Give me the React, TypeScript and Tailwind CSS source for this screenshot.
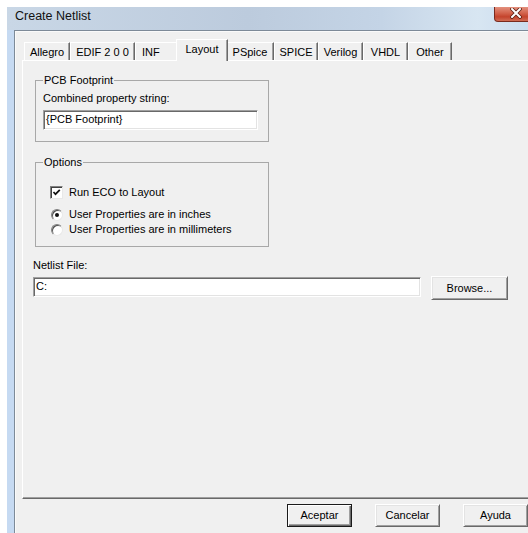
import React from "react";

type Tab = { label: string; cls: string; selected?: boolean; start?: boolean };

const tabs: Tab[] = [
  { label: "Allegro", cls: "w-[46px]" },
  { label: "EDIF 2 0 0", cls: "w-[65px]" },
  { label: "INF", cls: "w-[43px]", start: true },
  { label: "Layout", cls: "w-[52px]", selected: true },
  { label: "PSpice", cls: "w-[48px]" },
  { label: "SPICE", cls: "w-[44px]" },
  { label: "Verilog", cls: "w-[45px]" },
  { label: "VHDL", cls: "w-[45px]" },
  { label: "Other", cls: "w-[44px]" },
];

function TabHeader({ tab }: { tab: Tab }) {
  if (tab.selected) {
    return (
      <div
        className={`${tab.cls} relative z-10 -mx-[2px] mb-[-1px] h-[22px] shrink-0 border-l border-t border-r border-l-white border-t-white border-r-[#696969] bg-[#f0f0f0] pt-[3px] text-center leading-[13px] shadow-[inset_-1px_0_0_#a0a0a0]`}
      >
        {tab.label}
      </div>
    );
  }
  return (
    <div
      className={`${tab.cls} h-[18px] shrink-0 border-l border-t border-r border-l-white border-t-white border-r-[#696969] bg-[#f0f0f0] pt-[3px] leading-[13px] shadow-[inset_-1px_0_0_#a0a0a0] ${
        tab.start ? "pl-[6px] text-left" : "text-center"
      }`}
    >
      {tab.label}
    </div>
  );
}

function TextBox({ value, cls }: { value: string; cls: string }) {
  return (
    <div
      className={`${cls} h-[20px] border border-t-[#a0a0a0] border-l-[#a0a0a0] border-b-white border-r-white bg-white pl-[2px] leading-[16px] shadow-[inset_1px_1px_0_#696969,inset_-1px_-1px_0_#e3e3e3]`}
    >
      {value}
    </div>
  );
}

function Button({ label, cls, isDefault }: { label: string; cls: string; isDefault?: boolean }) {
  return (
    <div
      className={`${cls} flex items-center justify-center border ${
        isDefault
          ? "border-[#1a1a1a] shadow-[inset_1px_1px_0_#fff,inset_-1px_-1px_0_#696969,inset_-2px_-2px_0_#a0a0a0]"
          : "border-t-white border-l-white border-b-[#696969] border-r-[#696969] shadow-[inset_1px_1px_0_#e3e3e3,inset_-1px_-1px_0_#a0a0a0]"
      } bg-[#f0f0f0] leading-[13px]`}
    >
      {label}
    </div>
  );
}

function CheckBox() {
  return (
    <div className="flex h-[13px] w-[13px] items-center justify-center border border-t-[#808080] border-l-[#808080] border-b-[#e8e8e8] border-r-[#e8e8e8] bg-white shadow-[inset_1px_1px_0_#404040]">
      <svg width="9" height="9" viewBox="0 0 9 9">
        <polyline points="1.5,4 3.5,6.2 7.8,1.8" fill="none" stroke="#111" strokeWidth="1.7" />
      </svg>
    </div>
  );
}

function Radio({ checked }: { checked?: boolean }) {
  return (
    <div className="flex h-[13px] w-[13px] items-center justify-center">
      <div className="flex h-[12px] w-[12px] items-center justify-center rounded-full border border-t-[#808080] border-l-[#808080] border-b-[#e8e8e8] border-r-[#e8e8e8] bg-white shadow-[inset_1px_1px_0_#505050]">
        {checked && <div className="h-[4px] w-[4px] rounded-full bg-[#111]" />}
      </div>
    </div>
  );
}

export default function App() {
  return (
    <div className="h-[533px] w-[528px] overflow-hidden bg-white font-['Liberation_Sans',Arial,sans-serif] text-[11px] text-black">
      <div className="ml-[7px] mt-[7px] flex h-[540px] w-[535px] flex-col">
        {/* title bar */}
        <div className="flex h-[23px] shrink-0 items-start bg-[linear-gradient(90deg,#c9d7e6_0%,#bccbdd_45%,#c4d4e6_70%,#d8e6f2_88%,#c6d9ee_100%)]">
          <span className="pl-[8px] pt-[2px] text-[12.5px] leading-[15px] text-[#111]">Create Netlist</span>
          <div className="ml-auto mr-[4px] flex h-[15px] w-[44px] items-start justify-center rounded-b-[4px] border border-t-0 border-[#7a2a1e] bg-[linear-gradient(180deg,#e3907d_0%,#d2614a_45%,#c4432c_70%,#d06c55_100%)]">
            <svg width="14" height="11" viewBox="0 0 14 11" className="mt-[1px]">
              <path d="M3 1 L11 9 M11 1 L3 9" stroke="#5a2015" strokeWidth="3.6" strokeLinecap="round" />
              <path d="M3 1 L11 9 M11 1 L3 9" stroke="#ffffff" strokeWidth="2" strokeLinecap="round" />
            </svg>
          </div>
        </div>

        <div className="flex flex-1">
          {/* left frame edge */}
          <div className="w-[7px] shrink-0 bg-[#c6daf2]" />

          {/* dialog client area */}
          <div className="flex flex-1 flex-col border-l border-t border-[#7d8a98] bg-[#f0f0f0] pl-[7px] pt-[8px] shadow-[inset_1px_1px_0_#fafafa]">
            {/* tab strip */}
            <div className="ml-[2px] flex h-[21px] items-end">
              {tabs.map((t) => (
                <TabHeader key={t.label} tab={t} />
              ))}
            </div>

            {/* tab page */}
            <div className="h-[439px] border-l border-t border-b border-l-white border-t-white border-b-[#696969] pl-[10px] shadow-[inset_0_-1px_0_#a0a0a0]">
              <fieldset className="ml-[2px] mt-[13px] w-[234px] border border-[#a8a8a8] pb-[11px] pl-[7px]">
                <legend className="px-[1px] leading-[13px]">PCB Footprint</legend>
                <div className="mt-[5px] leading-[13px]">Combined property string:</div>
                <div className="mt-[5px]">
                  <TextBox value="{PCB Footprint}" cls="w-[215px]" />
                </div>
              </fieldset>

              <fieldset className="ml-[2px] mt-[14px] w-[234px] border border-[#a8a8a8] pb-[10px] pl-[7px]">
                <legend className="px-[1px] leading-[13px]">Options</legend>
                <div className="mt-[17px] flex h-[13px] items-center gap-[6px] pl-[7px] leading-[13px]">
                  <CheckBox />
                  <span>Run ECO to Layout</span>
                </div>
                <div className="mt-[9px] flex h-[13px] items-center gap-[6px] pl-[7px] leading-[13px]">
                  <Radio checked />
                  <span>User Properties are in inches</span>
                </div>
                <div className="mt-[2px] flex h-[13px] items-center gap-[6px] pl-[7px] leading-[13px]">
                  <Radio />
                  <span>User Properties are in millimeters</span>
                </div>
              </fieldset>

              <div className="mt-[12px] leading-[13px]">Netlist File:</div>
              <div className="mt-[5px] flex items-start">
                <TextBox value="C:" cls="w-[388px]" />
                <div className="ml-[10px] mt-[-1px]">
                  <Button label="Browse..." cls="h-[24px] w-[77px]" />
                </div>
              </div>
            </div>

            {/* dialog buttons */}
            <div className="ml-[265px] mt-[5px] flex gap-[23px]">
              <Button label="Aceptar" cls="h-[23px] w-[65px]" isDefault />
              <Button label="Cancelar" cls="h-[23px] w-[65px]" />
              <Button label="Ayuda" cls="h-[23px] w-[65px]" />
            </div>
          </div>
        </div>
      </div>
    </div>
  );
}
